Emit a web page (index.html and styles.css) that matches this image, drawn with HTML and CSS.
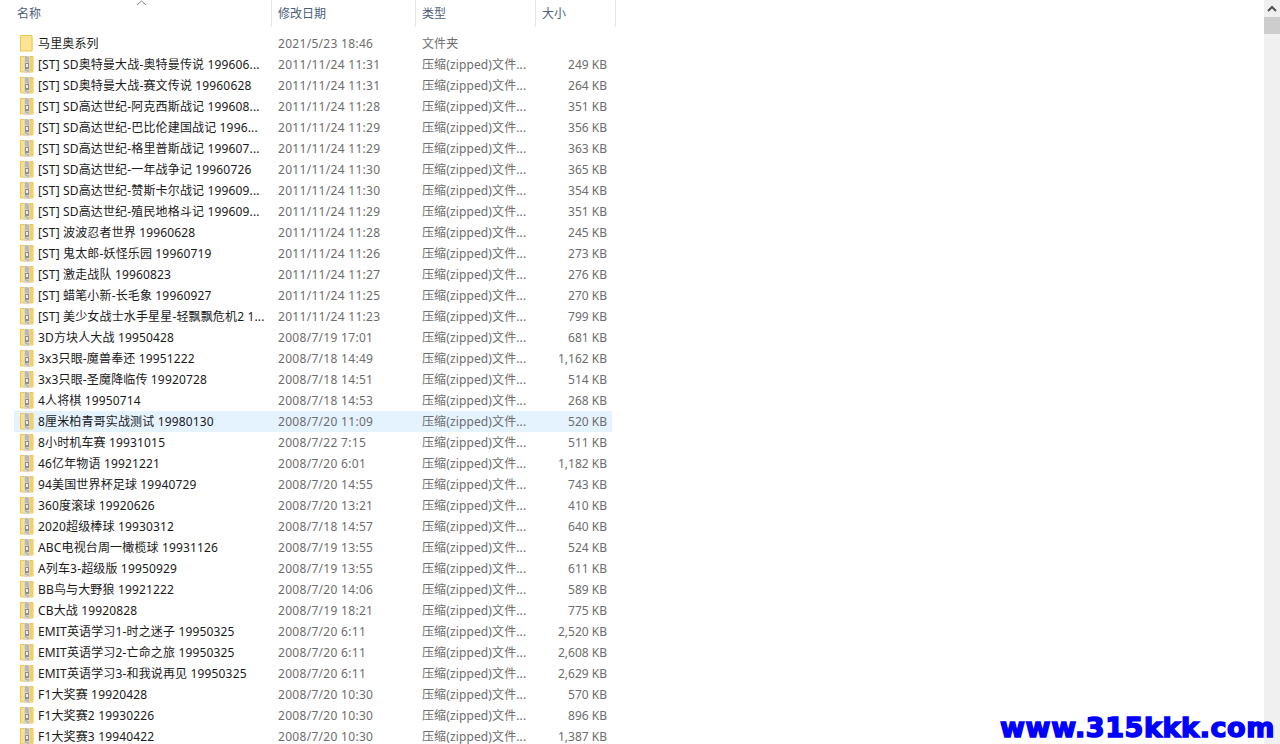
FILE: index.html
```html
<!DOCTYPE html>
<html>
<head>
    <meta charset="utf-8">
    <title>文件列表</title>
    <link rel="stylesheet" href="styles.css">
</head>
<body>
    <svg class="defs" width="0" height="0">
        <symbol id="zip" viewBox="0 0 14 17">
            <path d="M.5 .5h12.500v15.500h-12.500z" fill="#fbe08c" stroke="#efc650"/>
            <rect x="4" y="0" width="6" height="17" fill="#dad6c8"/>
            <path d="M5 1h2M7 2h2M5 3h2M7 4h2M5 5h2M7 6h2" stroke="#9a9a9a"/>
            <rect x="5" y="7" width="4" height="6" fill="#8f8f8f"/>
            <rect x="6" y="8" width="2" height="3" fill="#ececec"/>
            <path d="M5 14h2M7 15h2" stroke="#9a9a9a"/>
            <rect x="10" y="1" width="3" height="15" fill="#f4cf66"/>
        </symbol>
        <symbol id="folder" viewBox="0 0 14 17">
            <path d="M.5 .5h11.500v15.500h-11.500z" fill="#fce394" stroke="#efc650"/>
            <path d="M12.500 3v13" stroke="#f6d778"/>
        </symbol>
    </svg>

    <div class="page">
        <div class="list">
            <div class="head">
                <div class="col col-name">名称<svg class="sort" width="11" height="6"><path d="M1 5l4.500-4 4.500 4" fill="none" stroke="#8a8a8a"/></svg></div>
                <div class="col col-date">修改日期</div>
                <div class="col col-type">类型</div>
                <div class="col col-size">大小</div>
            </div>

            <div class="row"><svg class="ico"><use href="#folder"/></svg><span class="name">马里奥系列</span><span class="date">2021/5/23 18:46</span><span class="type">文件夹</span><span class="size"></span></div>
            <div class="row"><svg class="ico"><use href="#zip"/></svg><span class="name">[ST] SD奥特曼大战-奥特曼传说 199606...</span><span class="date">2011/11/24 11:31</span><span class="type">压缩(zipped)文件...</span><span class="size">249 KB</span></div>
            <div class="row"><svg class="ico"><use href="#zip"/></svg><span class="name">[ST] SD奥特曼大战-赛文传说 19960628</span><span class="date">2011/11/24 11:31</span><span class="type">压缩(zipped)文件...</span><span class="size">264 KB</span></div>
            <div class="row"><svg class="ico"><use href="#zip"/></svg><span class="name">[ST] SD高达世纪-阿克西斯战记 199608...</span><span class="date">2011/11/24 11:28</span><span class="type">压缩(zipped)文件...</span><span class="size">351 KB</span></div>
            <div class="row"><svg class="ico"><use href="#zip"/></svg><span class="name">[ST] SD高达世纪-巴比伦建国战记 1996...</span><span class="date">2011/11/24 11:29</span><span class="type">压缩(zipped)文件...</span><span class="size">356 KB</span></div>
            <div class="row"><svg class="ico"><use href="#zip"/></svg><span class="name">[ST] SD高达世纪-格里普斯战记 199607...</span><span class="date">2011/11/24 11:29</span><span class="type">压缩(zipped)文件...</span><span class="size">363 KB</span></div>
            <div class="row"><svg class="ico"><use href="#zip"/></svg><span class="name">[ST] SD高达世纪-一年战争记 19960726</span><span class="date">2011/11/24 11:30</span><span class="type">压缩(zipped)文件...</span><span class="size">365 KB</span></div>
            <div class="row"><svg class="ico"><use href="#zip"/></svg><span class="name">[ST] SD高达世纪-赞斯卡尔战记 199609...</span><span class="date">2011/11/24 11:30</span><span class="type">压缩(zipped)文件...</span><span class="size">354 KB</span></div>
            <div class="row"><svg class="ico"><use href="#zip"/></svg><span class="name">[ST] SD高达世纪-殖民地格斗记 199609...</span><span class="date">2011/11/24 11:29</span><span class="type">压缩(zipped)文件...</span><span class="size">351 KB</span></div>
            <div class="row"><svg class="ico"><use href="#zip"/></svg><span class="name">[ST] 波波忍者世界 19960628</span><span class="date">2011/11/24 11:28</span><span class="type">压缩(zipped)文件...</span><span class="size">245 KB</span></div>
            <div class="row"><svg class="ico"><use href="#zip"/></svg><span class="name">[ST] 鬼太郎-妖怪乐园 19960719</span><span class="date">2011/11/24 11:26</span><span class="type">压缩(zipped)文件...</span><span class="size">273 KB</span></div>
            <div class="row"><svg class="ico"><use href="#zip"/></svg><span class="name">[ST] 激走战队 19960823</span><span class="date">2011/11/24 11:27</span><span class="type">压缩(zipped)文件...</span><span class="size">276 KB</span></div>
            <div class="row"><svg class="ico"><use href="#zip"/></svg><span class="name">[ST] 蜡笔小新-长毛象 19960927</span><span class="date">2011/11/24 11:25</span><span class="type">压缩(zipped)文件...</span><span class="size">270 KB</span></div>
            <div class="row"><svg class="ico"><use href="#zip"/></svg><span class="name">[ST] 美少女战士水手星星-轻飘飘危机2 1...</span><span class="date">2011/11/24 11:23</span><span class="type">压缩(zipped)文件...</span><span class="size">799 KB</span></div>
            <div class="row"><svg class="ico"><use href="#zip"/></svg><span class="name">3D方块人大战 19950428</span><span class="date">2008/7/19 17:01</span><span class="type">压缩(zipped)文件...</span><span class="size">681 KB</span></div>
            <div class="row"><svg class="ico"><use href="#zip"/></svg><span class="name">3x3只眼-魔兽奉还 19951222</span><span class="date">2008/7/18 14:49</span><span class="type">压缩(zipped)文件...</span><span class="size">1,162 KB</span></div>
            <div class="row"><svg class="ico"><use href="#zip"/></svg><span class="name">3x3只眼-圣魔降临传 19920728</span><span class="date">2008/7/18 14:51</span><span class="type">压缩(zipped)文件...</span><span class="size">514 KB</span></div>
            <div class="row"><svg class="ico"><use href="#zip"/></svg><span class="name">4人将棋 19950714</span><span class="date">2008/7/18 14:53</span><span class="type">压缩(zipped)文件...</span><span class="size">268 KB</span></div>
            <div class="row hover"><svg class="ico"><use href="#zip"/></svg><span class="name">8厘米柏青哥实战测试 19980130</span><span class="date">2008/7/20 11:09</span><span class="type">压缩(zipped)文件...</span><span class="size">520 KB</span></div>
            <div class="row"><svg class="ico"><use href="#zip"/></svg><span class="name">8小时机车赛 19931015</span><span class="date">2008/7/22 7:15</span><span class="type">压缩(zipped)文件...</span><span class="size">511 KB</span></div>
            <div class="row"><svg class="ico"><use href="#zip"/></svg><span class="name">46亿年物语 19921221</span><span class="date">2008/7/20 6:01</span><span class="type">压缩(zipped)文件...</span><span class="size">1,182 KB</span></div>
            <div class="row"><svg class="ico"><use href="#zip"/></svg><span class="name">94美国世界杯足球 19940729</span><span class="date">2008/7/20 14:55</span><span class="type">压缩(zipped)文件...</span><span class="size">743 KB</span></div>
            <div class="row"><svg class="ico"><use href="#zip"/></svg><span class="name">360度滚球 19920626</span><span class="date">2008/7/20 13:21</span><span class="type">压缩(zipped)文件...</span><span class="size">410 KB</span></div>
            <div class="row"><svg class="ico"><use href="#zip"/></svg><span class="name">2020超级棒球 19930312</span><span class="date">2008/7/18 14:57</span><span class="type">压缩(zipped)文件...</span><span class="size">640 KB</span></div>
            <div class="row"><svg class="ico"><use href="#zip"/></svg><span class="name">ABC电视台周一橄榄球 19931126</span><span class="date">2008/7/19 13:55</span><span class="type">压缩(zipped)文件...</span><span class="size">524 KB</span></div>
            <div class="row"><svg class="ico"><use href="#zip"/></svg><span class="name">A列车3-超级版 19950929</span><span class="date">2008/7/19 13:55</span><span class="type">压缩(zipped)文件...</span><span class="size">611 KB</span></div>
            <div class="row"><svg class="ico"><use href="#zip"/></svg><span class="name">BB鸟与大野狼 19921222</span><span class="date">2008/7/20 14:06</span><span class="type">压缩(zipped)文件...</span><span class="size">589 KB</span></div>
            <div class="row"><svg class="ico"><use href="#zip"/></svg><span class="name">CB大战 19920828</span><span class="date">2008/7/19 18:21</span><span class="type">压缩(zipped)文件...</span><span class="size">775 KB</span></div>
            <div class="row"><svg class="ico"><use href="#zip"/></svg><span class="name">EMIT英语学习1-时之迷子 19950325</span><span class="date">2008/7/20 6:11</span><span class="type">压缩(zipped)文件...</span><span class="size">2,520 KB</span></div>
            <div class="row"><svg class="ico"><use href="#zip"/></svg><span class="name">EMIT英语学习2-亡命之旅 19950325</span><span class="date">2008/7/20 6:11</span><span class="type">压缩(zipped)文件...</span><span class="size">2,608 KB</span></div>
            <div class="row"><svg class="ico"><use href="#zip"/></svg><span class="name">EMIT英语学习3-和我说再见 19950325</span><span class="date">2008/7/20 6:11</span><span class="type">压缩(zipped)文件...</span><span class="size">2,629 KB</span></div>
            <div class="row"><svg class="ico"><use href="#zip"/></svg><span class="name">F1大奖赛 19920428</span><span class="date">2008/7/20 10:30</span><span class="type">压缩(zipped)文件...</span><span class="size">570 KB</span></div>
            <div class="row"><svg class="ico"><use href="#zip"/></svg><span class="name">F1大奖赛2 19930226</span><span class="date">2008/7/20 10:30</span><span class="type">压缩(zipped)文件...</span><span class="size">896 KB</span></div>
            <div class="row"><svg class="ico"><use href="#zip"/></svg><span class="name">F1大奖赛3 19940422</span><span class="date">2008/7/20 10:30</span><span class="type">压缩(zipped)文件...</span><span class="size">1,387 KB</span></div>
        </div>

        <div class="scrollbar">
            <div class="arrow"><svg width="16" height="17"><path d="M4 11l4-4 4 4" fill="none" stroke="#505050" stroke-width="2"/></svg></div>
            <div class="thumb"></div>
        </div>
    </div>

    <div class="mark">www.315kkk.com</div>
</body>
</html>
```

FILE: styles.css
```css
html, body
{
    margin: 0;
    height: 100%;
    overflow: hidden;
    background: #fff;
}
body
{
    font-family: "Noto Sans", "Noto Sans CJK SC", sans-serif;
    font-size: 12px;
}
.defs
{
    display: block;
}
.page
{
    display: flex;
    justify-content: space-between;
    height: 744px;
}
.list
{
    width: 616px;
}
.head
{
    display: grid;
    grid-template-columns: 272px 144px 120px 80px;
    height: 27px;
    margin-bottom: 6px;
}
.col
{
    position: relative;
    padding-left: 6px;
    line-height: 27px;
    color: #4c607a;
    border-right: 1px solid #e5e5e5;
    box-sizing: border-box;
}
.col-name
{
    padding-left: 17px;
}
.sort
{
    position: absolute;
    left: 136px;
    top: 0;
}
.row
{
    display: grid;
    grid-template-columns: 18px 246px 144px 120px 65px;
    align-items: center;
    width: 598px;
    height: 21px;
    margin-left: 14px;
    line-height: 21px;
    color: #6d6d6d;
}
.hover
{
    background: #e5f3ff;
}
.ico
{
    width: 14px;
    height: 17px;
    margin-left: 6px;
}
.name
{
    padding-left: 6px;
    color: #1a1a1a;
    letter-spacing: 0.15px;
    white-space: nowrap;
}
.date
{
    letter-spacing: 0.3px;
    white-space: nowrap;
}
.type
{
    letter-spacing: 0.12px;
    white-space: nowrap;
}
.size
{
    text-align: right;
    white-space: nowrap;
}
.scrollbar
{
    width: 16px;
    background: #f0f0f0;
}
.arrow
{
    height: 17px;
}
.thumb
{
    height: 17px;
    background: #cdcdcd;
}
.mark
{
    position: absolute;
    right: 5px;
    bottom: 0;
    color: #0000ff;
    font-family: "DejaVu Sans", sans-serif;
    font-size: 27px;
    font-weight: bold;
    line-height: 32px;
    letter-spacing: 0.6px;
    -webkit-text-stroke: 1.5px #0000ff;
}
```
